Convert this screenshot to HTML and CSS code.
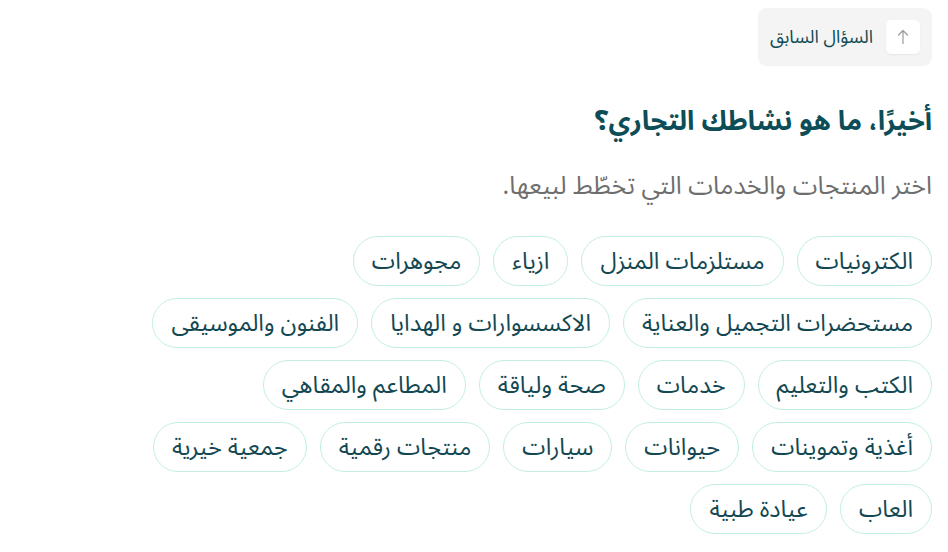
FILE: index.html
```html
<!DOCTYPE html>
<html lang="ar" dir="rtl">
<head>
<meta charset="utf-8">
<link rel="stylesheet" href="styles.css">
</head>
<body>
<main class="page">
  <div class="top">
    <button class="back">
      <span class="back-icon">
        <svg width="14" height="16" viewBox="0 0 14 16" fill="none" stroke="#9a9a9a" stroke-width="1.2" stroke-linecap="round" stroke-linejoin="round"><path d="M7 14.5V1.5M2.5 6L7 1.5 11.5 6"/></svg>
      </span>
      <span class="back-text">السؤال السابق</span>
    </button>
  </div>
  <h1 class="title">أخيرًا، ما هو نشاطك التجاري؟</h1>
  <p class="subtitle">اختر المنتجات والخدمات التي تخطّط لبيعها.</p>
  <div class="chips">
    <button class="chip">الكترونيات</button>
    <button class="chip">مستلزمات المنزل</button>
    <button class="chip">ازياء</button>
    <button class="chip">مجوهرات</button>
    <button class="chip">مستحضرات التجميل والعناية</button>
    <button class="chip">الاكسسوارات و الهدايا</button>
    <button class="chip">الفنون والموسيقى</button>
    <button class="chip">الكتب والتعليم</button>
    <button class="chip">خدمات</button>
    <button class="chip">صحة ولياقة</button>
    <button class="chip">المطاعم والمقاهي</button>
    <button class="chip">أغذية وتموينات</button>
    <button class="chip">حيوانات</button>
    <button class="chip">سيارات</button>
    <button class="chip">منتجات رقمية</button>
    <button class="chip">جمعية خيرية</button>
    <button class="chip">العاب</button>
    <button class="chip">عيادة طبية</button>
  </div>
</main>
</body>
</html>
```

FILE: styles.css
```css
* { box-sizing: border-box; }
html, body { margin: 0; padding: 0; background: #ffffff; }
body {
  font-family: "Noto Sans Arabic", "Noto Kufi Arabic", "DejaVu Sans", sans-serif;
  direction: rtl;
}
.page {
  padding: 8px 16px 0 16px;
  width: 948px;
}
.top { display: flex; }
.back {
  display: flex;
  align-items: center;
  gap: 13px;
  height: 58px;
  padding: 0 12px 0 12px;
  background: #f4f4f4;
  border: none;
  border-radius: 9px;
  font-family: inherit;
  cursor: pointer;
}
.back-icon {
  width: 34px;
  height: 34px;
  background: #ffffff;
  border-radius: 5px;
  box-shadow: 0 1px 2px rgba(0,0,0,0.06);
  display: flex;
  align-items: center;
  justify-content: center;
}
.back-text {
  font-size: 18px;
  color: #0f4b55;
}
.title {
  margin: 36px 0 0 0;
  font-size: 27px;
  line-height: 40px;
  font-weight: 700;
  color: #0c4d58;
}
.subtitle {
  margin: 27px 0 0 0;
  font-size: 25px;
  line-height: 34px;
  color: #6e6e6e;
}
.chips {
  margin-top: 33px;
  display: flex;
  flex-wrap: wrap;
  gap: 12px 13px;
  width: 800px;
}
.chip {
  height: 50px;
  padding: 0 18px;
  border: 1px solid #c2efe5;
  border-radius: 25px;
  background: #ffffff;
  font-family: inherit;
  font-size: 23.5px;
  color: #134852;
  cursor: pointer;
}
```
